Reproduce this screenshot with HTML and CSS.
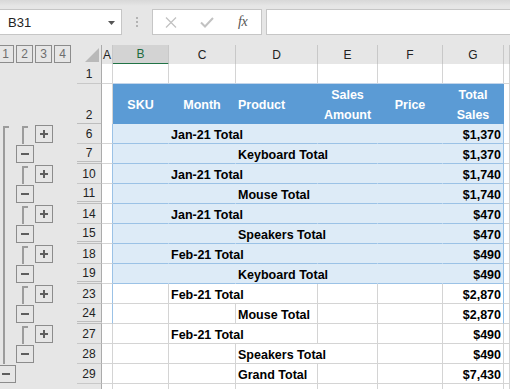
FILE: index.html
```html
<!DOCTYPE html>
<html>
<head>
<meta charset="utf-8">
<link rel="stylesheet" href="styles.css">
</head>
<body>
<div class="toolbar">
  <div class="namebox"><span>B31</span><svg class="dd" width="7" height="4" viewBox="0 0 7 4"><path d="M0 0H7L3.5 4Z" fill="#555"/></svg></div>
  <div class="dots"><i></i><i></i><i></i></div>
  <div class="fxbox">
    <svg width="12" height="11" viewBox="0 0 12 11"><path d="M1 0.5L11 10.5M11 0.5L1 10.5" stroke="#c2c2c2" stroke-width="1.3" fill="none"/></svg>
    <svg width="14" height="11" viewBox="0 0 14 11"><path d="M1 5.5L5 9.5L13 1" stroke="#c2c2c2" stroke-width="2" fill="none"/></svg>
    <span class="fx">fx</span>
  </div>
  <div class="formula"></div>
</div>
<div class="main">
  <div class="outline">
    <div class="levels"><span class="lv">1</span><span class="lv">2</span><span class="lv">3</span><span class="lv">4</span></div>
    <div class="ospacer"></div>
    <div class="l1">
      <div class="l1col">
        <div class="bracket tall"></div>
        <div class="obtn l1btn"><svg viewBox="0 0 16 16"><path d="M4 8H12" stroke="#5e5e5e" stroke-width="2"/></svg></div>
      </div>
      <div class="groups">
        <div class="grp"><div class="bracket"></div><div class="obtn plus"><svg viewBox="0 0 16 16"><path d="M4 8H12M8 4V12" stroke="#5e5e5e" stroke-width="2"/></svg></div><div class="obtn minus"><svg viewBox="0 0 16 16"><path d="M4 8H12" stroke="#5e5e5e" stroke-width="2"/></svg></div></div>
        <div class="grp"><div class="bracket"></div><div class="obtn plus"><svg viewBox="0 0 16 16"><path d="M4 8H12M8 4V12" stroke="#5e5e5e" stroke-width="2"/></svg></div><div class="obtn minus"><svg viewBox="0 0 16 16"><path d="M4 8H12" stroke="#5e5e5e" stroke-width="2"/></svg></div></div>
        <div class="grp"><div class="bracket"></div><div class="obtn plus"><svg viewBox="0 0 16 16"><path d="M4 8H12M8 4V12" stroke="#5e5e5e" stroke-width="2"/></svg></div><div class="obtn minus"><svg viewBox="0 0 16 16"><path d="M4 8H12" stroke="#5e5e5e" stroke-width="2"/></svg></div></div>
        <div class="grp"><div class="bracket"></div><div class="obtn plus"><svg viewBox="0 0 16 16"><path d="M4 8H12M8 4V12" stroke="#5e5e5e" stroke-width="2"/></svg></div><div class="obtn minus"><svg viewBox="0 0 16 16"><path d="M4 8H12" stroke="#5e5e5e" stroke-width="2"/></svg></div></div>
        <div class="grp"><div class="bracket"></div><div class="obtn plus"><svg viewBox="0 0 16 16"><path d="M4 8H12M8 4V12" stroke="#5e5e5e" stroke-width="2"/></svg></div><div class="obtn minus"><svg viewBox="0 0 16 16"><path d="M4 8H12" stroke="#5e5e5e" stroke-width="2"/></svg></div></div>
        <div class="grp"><div class="bracket"></div><div class="obtn plus"><svg viewBox="0 0 16 16"><path d="M4 8H12M8 4V12" stroke="#5e5e5e" stroke-width="2"/></svg></div><div class="obtn minus"><svg viewBox="0 0 16 16"><path d="M4 8H12" stroke="#5e5e5e" stroke-width="2"/></svg></div></div>
      </div>
    </div>
  </div>

  <div class="sheet">
    <div class="row colhdr">
      <div class="corner"><svg width="16" height="16" viewBox="0 0 16 16"><path d="M15 1V15H1Z" fill="#b9b9b9"/></svg></div>
      <div>A</div><div class="sel">B</div><div>C</div><div>D</div><div>E</div><div>F</div><div>G</div><div></div>
    </div>
    <div class="row">
      <div class="rh">1</div><div></div><div class="tb"></div><div class="tb"></div><div class="tb"></div><div class="tb"></div><div class="tb"></div><div class="tb"></div><div></div>
    </div>
    <div class="row tall">
      <div class="rh hid">2</div><div></div>
      <div class="hd">SKU</div><div class="hd">Month</div><div class="hd left">Product</div><div class="hd">Sales<br>Amount</div><div class="hd">Price</div><div class="hd last">Total<br>Sales</div><div></div>
    </div>

    <div class="row band">
      <div class="rh">6</div><div class="ca"></div><div class="b"></div><div class="b t s2">Jan-21 Total</div><div class="b"></div><div class="b"></div><div class="b g num">$1,370</div><div></div>
    </div>
    <div class="row band">
      <div class="rh hid">7</div><div class="ca"></div><div class="b"></div><div class="b"></div><div class="b t s2">Keyboard Total</div><div class="b"></div><div class="b g num">$1,370</div><div></div>
    </div>
    <div class="row band">
      <div class="rh">10</div><div class="ca"></div><div class="b"></div><div class="b t s2">Jan-21 Total</div><div class="b"></div><div class="b"></div><div class="b g num">$1,740</div><div></div>
    </div>
    <div class="row band">
      <div class="rh hid">11</div><div class="ca"></div><div class="b"></div><div class="b"></div><div class="b t s2">Mouse Total</div><div class="b"></div><div class="b g num">$1,740</div><div></div>
    </div>
    <div class="row band">
      <div class="rh">14</div><div class="ca"></div><div class="b"></div><div class="b t s2">Jan-21 Total</div><div class="b"></div><div class="b"></div><div class="b g num">$470</div><div></div>
    </div>
    <div class="row band">
      <div class="rh hid">15</div><div class="ca"></div><div class="b"></div><div class="b"></div><div class="b t s2">Speakers Total</div><div class="b"></div><div class="b g num">$470</div><div></div>
    </div>
    <div class="row band">
      <div class="rh">18</div><div class="ca"></div><div class="b"></div><div class="b t s2">Feb-21 Total</div><div class="b"></div><div class="b"></div><div class="b g num">$490</div><div></div>
    </div>
    <div class="row band">
      <div class="rh hid">19</div><div class="ca"></div><div class="b"></div><div class="b"></div><div class="b t s2">Keyboard Total</div><div class="b"></div><div class="b g num">$490</div><div></div>
    </div>

    <div class="row plain">
      <div class="rh">23</div><div class="ca"></div><div></div><div class="t s2">Feb-21 Total</div><div></div><div></div><div class="g num">$2,870</div><div></div>
    </div>
    <div class="row plain">
      <div class="rh hid">24</div><div class="ca"></div><div></div><div></div><div class="t">Mouse Total</div><div></div><div></div><div class="g num">$2,870</div><div></div>
    </div>
    <div class="row">
      <div class="rh">27</div><div></div><div></div><div class="t s2">Feb-21 Total</div><div></div><div></div><div class="num">$490</div><div></div>
    </div>
    <div class="row">
      <div class="rh">28</div><div></div><div></div><div></div><div class="t s2">Speakers Total</div><div></div><div class="num">$490</div><div></div>
    </div>
    <div class="row">
      <div class="rh">29</div><div></div><div></div><div></div><div class="t">Grand Total</div><div></div><div></div><div class="num">$7,430</div><div></div>
    </div>
    <div class="row">
      <div class="rh"></div><div></div><div></div><div></div><div></div><div></div><div></div><div></div><div></div>
    </div>
  </div>
</div>
</body>
</html>
```

FILE: styles.css
```css
* { box-sizing: border-box; }
html, body {
  margin: 0;
  width: 510px;
  height: 389px;
  overflow: hidden;
  background: #e6e6e6;
  font-family: "Liberation Sans", Arial, sans-serif;
  color: #000;
}

/* ---------- toolbar ---------- */
.toolbar {
  height: 45px;
  display: flex;
  align-items: flex-start;
  padding-top: 9px;
  background: linear-gradient(#d8d8d8, #e6e6e6 6px);
}
.namebox {
  width: 123px;
  height: 26px;
  margin-left: -1px;
  background: #fff;
  border: 1px solid #c6c6c6;
  display: flex;
  align-items: center;
  justify-content: space-between;
  padding: 0 6px 0 8px;
  font-size: 13px;
  color: #222;
}
.namebox .dd { margin-top: 1px; }
.dots {
  width: 30px;
  height: 26px;
  display: flex;
  flex-direction: column;
  align-items: center;
  justify-content: center;
  gap: 2px;
}
.dots i {
  width: 2px;
  height: 2px;
  background: #b3b3b3;
}
.fxbox {
  width: 110px;
  height: 26px;
  background: #fff;
  border: 1px solid #c6c6c6;
  display: flex;
  align-items: center;
  padding-left: 12px;
  gap: 23px;
}
.fx {
  font-family: "Liberation Serif", "Times New Roman", serif;
  font-style: italic;
  font-size: 14px;
  color: #555;
  letter-spacing: -0.5px;
  margin-left: 1px;
}
.formula {
  flex: 1;
  height: 26px;
  margin-left: 4px;
  margin-right: -2px;
  background: #fff;
  border: 1px solid #c6c6c6;
}

/* ---------- layout ---------- */
.main {
  display: flex;
  align-items: flex-start;
}

/* ---------- outline panel ---------- */
.outline {
  width: 80px;
  margin-left: -3px;
  flex: none;
  display: flex;
  flex-direction: column;
}
.levels {
  height: 19px;
  display: flex;
  gap: 2px;
}
.lv {
  width: 17px;
  height: 18px;
  border: 1px solid #8c8c8c;
  color: #6e6e6e;
  font-size: 12px;
  display: flex;
  align-items: center;
  justify-content: center;
}
.ospacer { height: 60px; }
.l1 { display: flex; }
.l1col {
  width: 19px;
  display: flex;
  flex-direction: column;
}
.bracket {
  width: 6px;
  height: 18px;
  margin: 2px 0 0 6px;
  border-left: 2px solid #9c9c9c;
  border-top: 2px solid #9c9c9c;
}
.bracket.tall { height: 238px; }
.groups { display: flex; flex-direction: column; }
.grp {
  display: grid;
  grid-template-columns: 19px 19px;
  grid-template-rows: 20px 20px;
}
.obtn {
  width: 18px;
  height: 18px;
  margin-top: 1px;
  border: 1px solid #8c8c8c;
  background: #e6e6e6;
}
.obtn svg { display: block; width: 16px; height: 16px; }
.l1btn { width: 19px; }
.grp .plus { grid-column: 2; grid-row: 1; }
.grp .minus { grid-column: 1; grid-row: 2; }

/* ---------- sheet ---------- */
.sheet { flex: 1; }
.row {
  display: grid;
  grid-template-columns: 25px 11px 56px 67px 82px 60px 65px 61px 1fr;
  height: 20px;
}
.row.tall { height: 40px; }
.row > div {
  background: #fff;
  border-right: 1px solid #d4d4d4;
  border-bottom: 1px solid #d4d4d4;
  white-space: nowrap;
  overflow: visible;
}

.colhdr { height: 19px; }
.colhdr > div {
  background: #e6e6e6;
  border-right-color: #c8c8c8;
  border-bottom-color: #ababab;
  font-size: 12px;
  color: #222;
  display: flex;
  align-items: center;
  justify-content: center;
  line-height: 18px;
}
.colhdr > .corner {
  border-right-color: #ababab;
  justify-content: flex-end;
  align-items: flex-end;
  padding: 0 1px 1px 0;
}
.colhdr > .sel {
  background: #d3d3d3;
  border-bottom: 2px solid #217346;
  color: #1d6b40;
}

.row > .rh {
  background: #e6e6e6;
  border-right-color: #ababab;
  border-bottom-color: #c8c8c8;
  font-size: 12px;
  color: #222;
  display: flex;
  align-items: flex-end;
  justify-content: center;
  line-height: 16px;
  padding-bottom: 1px;
}
.row > .rh.hid { border-bottom: 3px double #bdbdbd; padding-bottom: 0; }

.row > .tb { border-bottom-color: #c3d5ea; }

.row > .hd {
  background: #5b9bd5;
  border-right-color: transparent;
  border-bottom-color: #a9c8e8;
  color: #fff;
  font-weight: bold;
  font-size: 12.5px;
  line-height: 20px;
  text-align: center;
  display: flex;
  align-items: center;
  justify-content: center;
  padding-top: 1px;
}
.row > .hd.left { justify-content: flex-start; text-align: left; padding-left: 2px; }
.row > .hd.last { border-right-color: #5b9bd5; }

.row > .ca { border-right-color: #9bc2e6; }
.row > .b {
  background: #ddebf7;
  border-right-color: transparent;
  border-bottom-color: #9bc2e6;
}
.row > .g { border-right-color: #9bc2e6; }

.row > .t, .row > .num {
  font-weight: bold;
  font-size: 12.5px;
  line-height: 16px;
  padding: 3px 3px 0 2px;
}
.row > .s2 { grid-column: span 2; }
.row > .num { text-align: right; padding-right: 2px; }
```
